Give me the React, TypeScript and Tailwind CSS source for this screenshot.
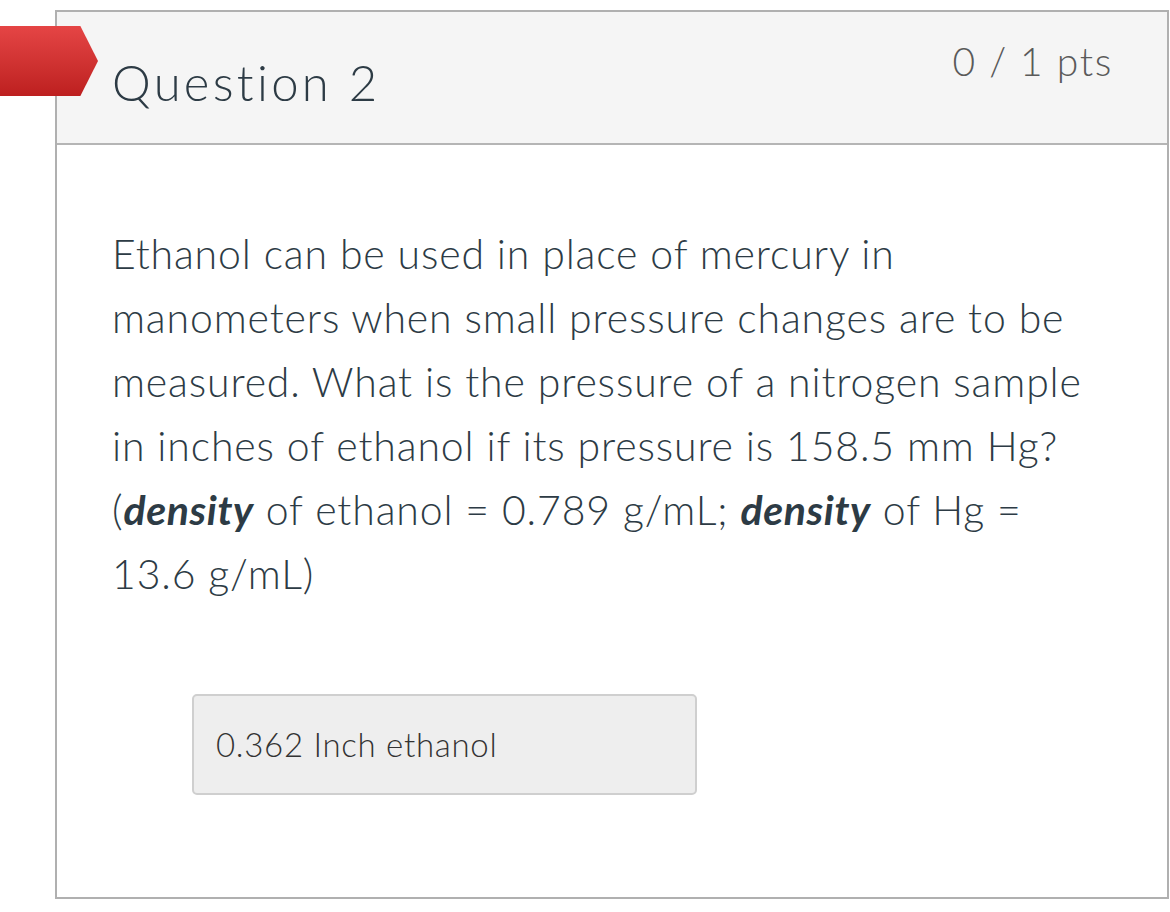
import React from "react";

function QuestionTag() {
  return (
    <div className="absolute left-0 top-[26px] w-[98px] h-[70px] [clip-path:polygon(0_0,82%_0,100%_50%,82%_100%,0_100%)] bg-gradient-to-b from-[#e54545] to-[#bd1f1f]" />
  );
}

export default function App() {
  return (
    <div
      className="relative w-[1170px] h-[912px] bg-white overflow-hidden pt-[10px] pl-[55px] text-[#2d3b45]"
      style={{ fontFamily: "Lato, 'Noto Sans', sans-serif" }}
    >
      <QuestionTag />
      <div className="w-[1114px] h-[889px] border-2 border-[#b0b0b0] flex flex-col">
        <div className="h-[133px] bg-[#f5f5f5] border-b-2 border-[#b5b5b5] flex justify-between pl-[55px] pr-[54px]">
          <h2 className="mt-[40px] text-[49px] leading-[60px] font-light tracking-[3.3px]">Question 2</h2>
          <div className="mt-[25px] text-[39px] leading-[48px] font-light text-[#5a5a5a] tracking-[1.7px]">0 / 1 pts</div>
        </div>
        <div className="pl-[55px] pr-[56px] pt-[77px]">
          <p className="text-[41px] leading-[64px] font-light tracking-[0.85px]">
            Ethanol can be used in place of mercury in manometers when small pressure changes are to be measured. What is
            the pressure of a nitrogen sample in inches of ethanol if its pressure is 158.5 mm Hg? (
            <strong className="font-bold italic tracking-[0.6px]">density</strong> of ethanol = 0.789 g/mL;{" "}
            <strong className="font-bold italic tracking-[0.6px]">density</strong> of Hg = 13.6 g/mL)
          </p>
          <div className="mt-[88px] ml-[80px] w-[505px] h-[101px] rounded-[5px] border-2 border-[#cfcfcf] bg-[#eeeeee] flex items-center pl-[22px]">
            <span className="text-[33px] font-light text-[#333] tracking-[0.7px]">0.362 Inch ethanol</span>
          </div>
        </div>
      </div>
    </div>
  );
}
